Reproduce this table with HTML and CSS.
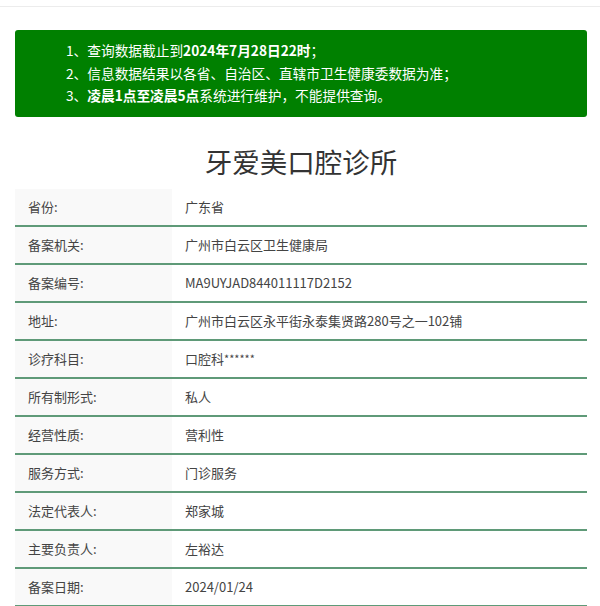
FILE: index.html
```html
<!DOCTYPE html>
<html lang="zh-CN">
<head>
<meta charset="utf-8">
<title>牙爱美口腔诊所</title>
<link rel="stylesheet" href="styles.css">
</head>
<body>
<div class="topbar"></div>
<main class="page">
  <section class="notice">
    <ol class="notice-list">
      <li>1、查询数据截止到<b>2024年7月28日22时</b>；</li>
      <li>2、信息数据结果以各省、自治区、直辖市卫生健康委数据为准；</li>
      <li>3、<b>凌晨1点至凌晨5点</b>系统进行维护，不能提供查询。</li>
    </ol>
  </section>
  <h1 class="title">牙爱美口腔诊所</h1>
  <div class="info">
    <div class="row"><div class="label">省份:</div><div class="value">广东省</div></div>
    <div class="row"><div class="label">备案机关:</div><div class="value">广州市白云区卫生健康局</div></div>
    <div class="row"><div class="label">备案编号:</div><div class="value">MA9UYJAD844011117D2152</div></div>
    <div class="row"><div class="label">地址:</div><div class="value">广州市白云区永平街永泰集贤路280号之一102铺</div></div>
    <div class="row"><div class="label">诊疗科目:</div><div class="value">口腔科<span class="stars">******</span></div></div>
    <div class="row"><div class="label">所有制形式:</div><div class="value">私人</div></div>
    <div class="row"><div class="label">经营性质:</div><div class="value">营利性</div></div>
    <div class="row"><div class="label">服务方式:</div><div class="value">门诊服务</div></div>
    <div class="row"><div class="label">法定代表人:</div><div class="value">郑家城</div></div>
    <div class="row"><div class="label">主要负责人:</div><div class="value">左裕达</div></div>
    <div class="row"><div class="label">备案日期:</div><div class="value">2024/01/24</div></div>
  </div>
</main>
</body>
</html>
```

FILE: styles.css
```css
* { box-sizing: border-box; }
html, body { margin: 0; padding: 0; background: #fff; }
body {
  font-family: "Noto Sans CJK SC", "Open Sans", sans-serif;
  color: #333;
  font-size: 13px;
}
.topbar {
  height: 7px;
  border-bottom: 1px solid #ececec;
}
.page {
  padding: 0 13px 0 15px;
}
.notice {
  margin-top: 23px;
  background: #008000;
  border-radius: 3px;
  padding: 9px 10px 10px 51px;
  color: #fff;
}
.notice-list {
  list-style: none;
  margin: 0;
  padding: 0;
}
.notice-list li {
  line-height: 22.5px;
  font-size: 13.7px;
}
.notice-list b { font-weight: 700; }
.title {
  margin: 24px 0 8px;
  text-align: center;
  font-size: 27.5px;
  line-height: 40px;
  font-weight: 400;
  color: #333;
}
.info {
  display: flex;
  flex-direction: column;
}
.row {
  display: grid;
  grid-template-columns: 157px 1fr;
  height: 38px;
  border-bottom: 2px solid #5f9a78;
}
.label {
  background: #f9f9f9;
  padding-left: 13px;
  display: flex;
  align-items: center;
  color: #444;
}
.value {
  padding-left: 13px;
  display: flex;
  align-items: center;
  color: #444;
}
.stars {
  font-size: 11px;
  align-self: flex-start;
  margin-top: 9px;
}
```
